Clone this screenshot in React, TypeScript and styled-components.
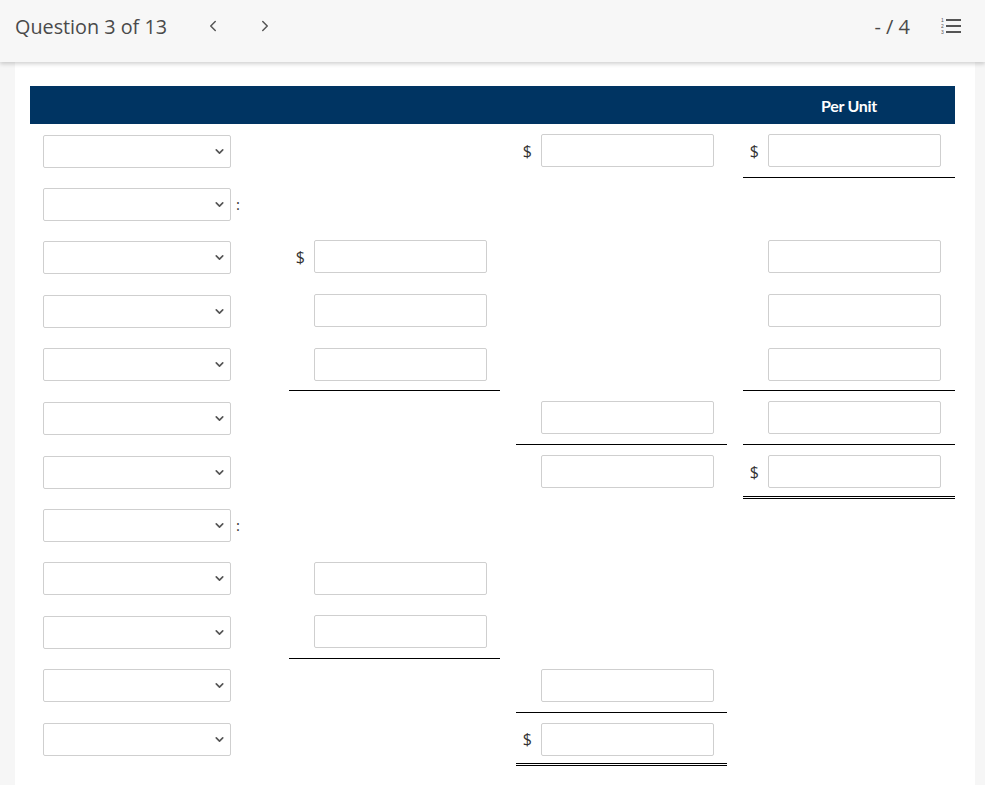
import React from 'react';
import styled, {createGlobalStyle, css} from "styled-components";
import {ChevronDown, ChevronLeft, ChevronRight} from "lucide-react";

const GlobalStyle = createGlobalStyle`
    body {
      margin: 0;
      background-color: #f6f6f6;
      font-family: "Open Sans", "Liberation Sans", sans-serif;
      color: #333;
    }
`

const TopBar = styled.div`
    height: 62px;
    box-sizing: border-box;
    background-color: #f7f7f7;
    box-shadow: 0 2px 4px rgba(0, 0, 0, 0.18);
    display: flex;
    align-items: center;
    padding: 0 24px 10px 15px;
    position: relative;
    z-index: 1;
`

const Title = styled.div`
    font-size: 19.8px;
    color: #4a4a4a;
`

const NavButton = styled.button<{ first?: boolean }>`
    border: none;
    background: none;
    padding: 0;
    display: flex;
    align-items: center;
    color: #555;
    margin-left: ${({first}) => first ? '37px' : '34px'};
`

const Spacer = styled.div`
    flex: 1;
`

const Score = styled.div`
    font-size: 20px;
    color: #4a4a4a;
    margin-right: 31px;
`

const Page = styled.div`
    padding: 0 10px 0 15px;
`

const Card = styled.div`
    background-color: #fff;
    padding: 24px 20px 40px 15px;
    min-height: 700px;
`

const HeaderRow = styled.div`
    display: grid;
    grid-template-columns: 1fr 211px 211px 212px;
    column-gap: 16px;
    background-color: #003462;
    height: 38px;
    align-items: center;
`

const HeaderCell = styled.div`
    font-family: Lato, "Open Sans", sans-serif;
    font-weight: 700;
    font-size: 16px;
    color: #fff;
    text-align: center;
    letter-spacing: -0.3px;
`

const Row = styled.div`
    display: grid;
    grid-template-columns: 1fr 211px 211px 212px;
    column-gap: 16px;
`

type Line = 'none' | 'single' | 'double'

const Cell = styled.div<{ line?: Line }>`
    display: flex;
    align-items: center;
    padding: 10px 13px 9.7px 0;
    border-bottom: 1px solid transparent;
    ${({line}) => line === 'single' && css`
      border-bottom: 1px solid #000;
    `}
    ${({line}) => line === 'double' && css`
      padding-bottom: 7.7px;
      border-bottom: 3px double #000;
    `}
`

const LabelCell = styled.div`
    display: flex;
    align-items: center;
    padding: 10px 0 9.7px 13px;
`

const SelectWrap = styled.div`
    position: relative;
    display: flex;
    align-items: center;
    color: #555;
    svg {
      position: absolute;
      right: 5px;
      pointer-events: none;
    }
`

const Select = styled.select`
    width: 188px;
    height: 33px;
    appearance: none;
    border: 1px solid #cfcfcf;
    border-radius: 2px;
    background-color: #fff;
    font-family: "Open Sans", sans-serif;
    font-size: 14px;
    color: #333;
`

const Colon = styled.span`
    margin-left: 5px;
    font-size: 15px;
`

const Dollar = styled.span`
    width: 25px;
    flex: none;
    box-sizing: border-box;
    padding-right: 9px;
    text-align: right;
    font-size: 16px;
    color: #333;
`

const Input = styled.input`
    width: 173px;
    height: 33px;
    box-sizing: border-box;
    border: 1px solid #cfcfcf;
    border-radius: 2px;
    background: #fff;
    padding: 0 6px;
`

interface Entry {
    dollar?: boolean
    line?: Line
}

interface RowData {
    colon?: boolean
    cols: (Entry | null)[]
}

const rows: RowData[] = [
    {cols: [null, {dollar: true}, {dollar: true, line: 'single'}]},
    {colon: true, cols: [null, null, null]},
    {cols: [{dollar: true}, null, {}]},
    {cols: [{}, null, {}]},
    {cols: [{line: 'single'}, null, {line: 'single'}]},
    {cols: [null, {line: 'single'}, {line: 'single'}]},
    {cols: [null, {}, {dollar: true, line: 'double'}]},
    {colon: true, cols: [null, null, null]},
    {cols: [{}, null, null]},
    {cols: [{line: 'single'}, null, null]},
    {cols: [null, {line: 'single'}, null]},
    {cols: [null, {dollar: true, line: 'double'}, null]},
]

const ListIcon = () => (
    <svg width="20" height="18" viewBox="0 0 20 18">
        <text x="0" y="5" fontSize="5" fill="#555" fontFamily="Liberation Sans">1</text>
        <text x="0" y="11" fontSize="5" fill="#555" fontFamily="Liberation Sans">2</text>
        <text x="0" y="17" fontSize="5" fill="#555" fontFamily="Liberation Sans">3</text>
        <rect x="5" y="2" width="15" height="2" fill="#555"/>
        <rect x="5" y="8" width="15" height="2" fill="#555"/>
        <rect x="5" y="14" width="15" height="2" fill="#555"/>
    </svg>
)

export default function App() {
    return <>
        <GlobalStyle/>
        <TopBar>
            <Title>Question 3 of 13</Title>
            <NavButton first><ChevronLeft size={18} strokeWidth={2}/></NavButton>
            <NavButton><ChevronRight size={18} strokeWidth={2}/></NavButton>
            <Spacer/>
            <Score>- / 4</Score>
            <ListIcon/>
        </TopBar>
        <Page>
            <Card>
                <HeaderRow>
                    <div/>
                    <div/>
                    <div/>
                    <HeaderCell>Per Unit</HeaderCell>
                </HeaderRow>
                {rows.map((row, i) => (
                    <Row key={i}>
                        <LabelCell>
                            <SelectWrap>
                                <Select defaultValue="">
                                    <option value=""></option>
                                </Select>
                                <ChevronDown size={13} strokeWidth={3}/>
                            </SelectWrap>
                            {row.colon && <Colon>:</Colon>}
                        </LabelCell>
                        {row.cols.map((c, j) => (
                            <Cell key={j} line={c?.line}>
                                {c && <>
                                    <Dollar>{c.dollar ? '$' : ''}</Dollar>
                                    <Input type="text"/>
                                </>}
                            </Cell>
                        ))}
                    </Row>
                ))}
            </Card>
        </Page>
    </>
}
